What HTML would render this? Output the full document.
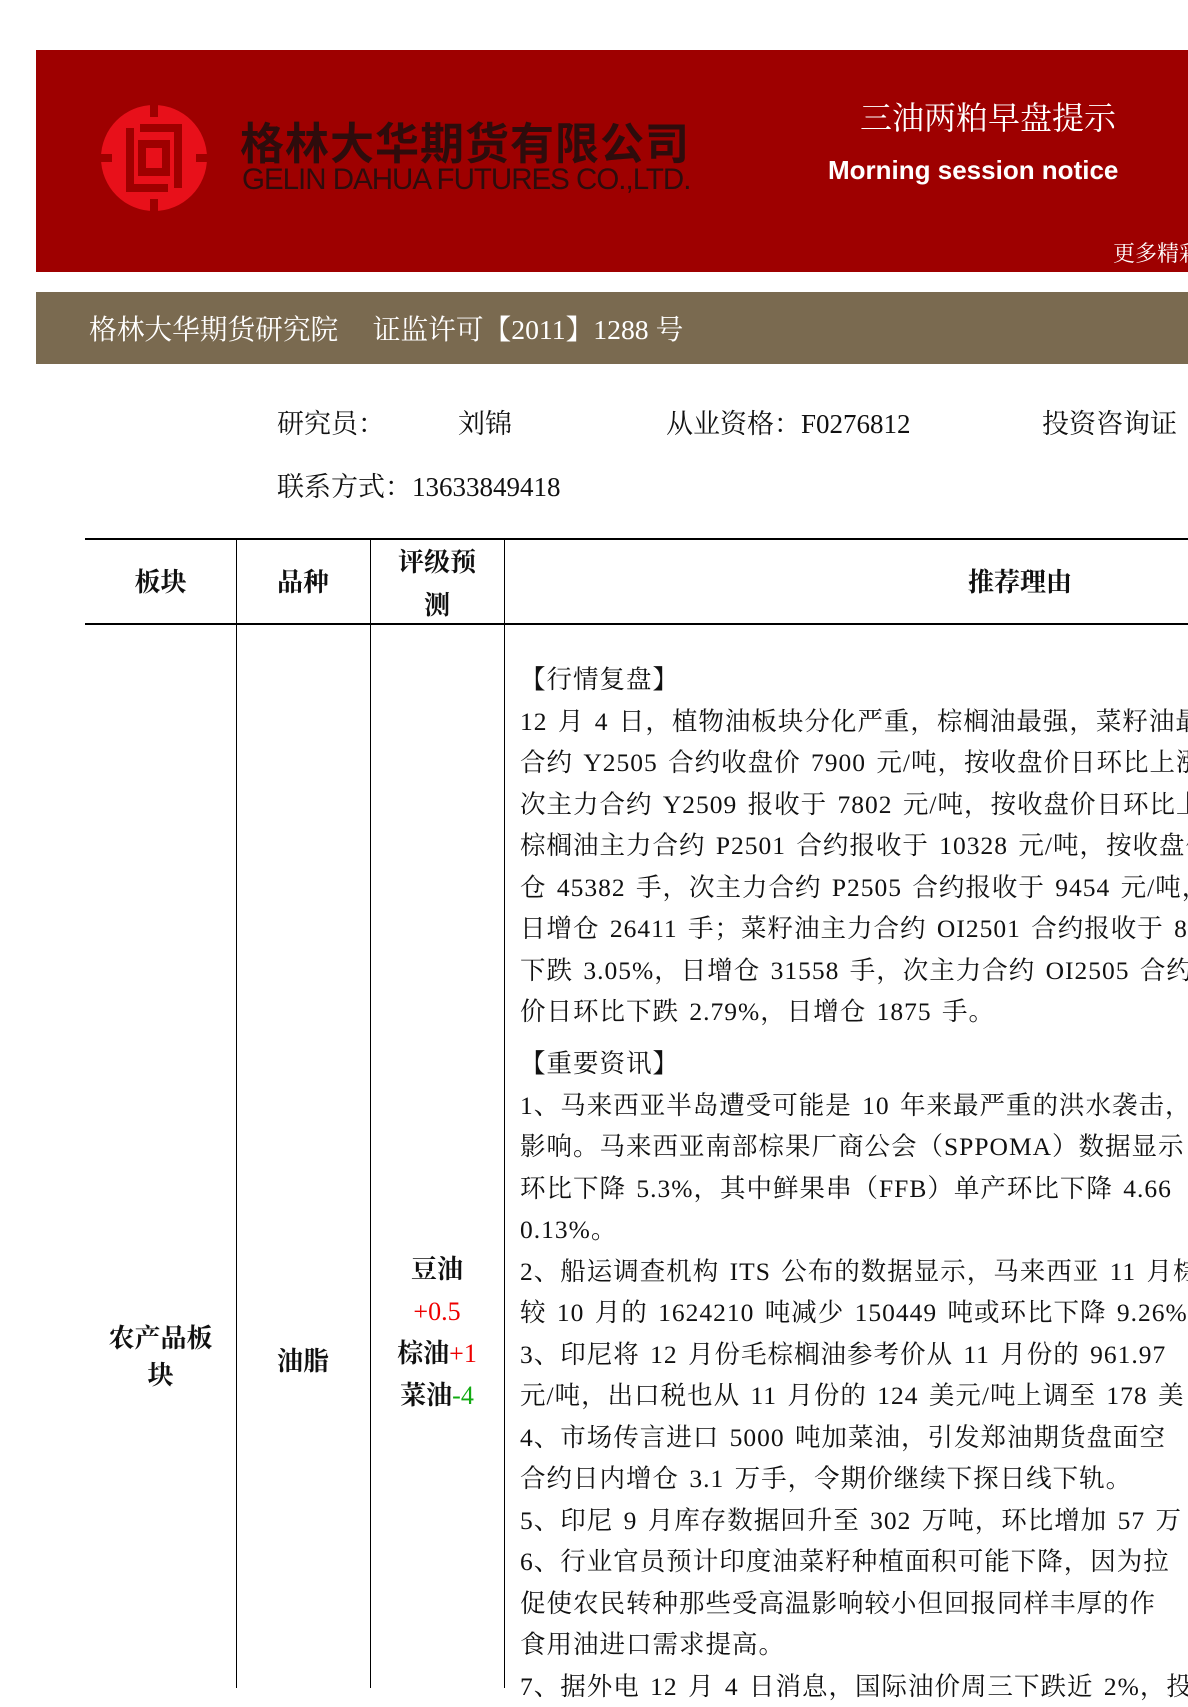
<!DOCTYPE html>
<html><head><meta charset="utf-8"><style>
*{margin:0;padding:0;box-sizing:border-box}
body{width:1188px;height:1680px;overflow:hidden;background:#fff;position:relative;font-family:"Liberation Serif","Noto Serif CJK SC",serif;color:#111}
.a{position:absolute;white-space:nowrap}
.red{position:absolute;left:36px;top:50px;width:1200px;height:222px;background:#9e0000}
.brown{position:absolute;left:36px;top:292px;width:1200px;height:72px;background:#7a6a50}
.hl{position:absolute;height:1px;background:#000}
.vl{position:absolute;width:1px;background:#000}
.t{position:absolute;left:520px;font-size:25.5px;line-height:41.5px;white-space:nowrap;letter-spacing:1px;word-spacing:3px}
.c{position:absolute;text-align:center;font-size:26px;font-weight:bold;line-height:40px}
</style></head><body>
<div class="red"></div>
<svg class="a" style="left:98px;top:104px" width="112" height="108" viewBox="0 0 112 108">
<circle cx="56" cy="54" r="53" fill="#e8101a"/>
<g fill="none" stroke="#9e0000" stroke-width="8">
<path d="M32 24 V84 H70"/>
<path d="M80 84 V24 H42"/>
<rect x="44" y="40" width="24" height="28"/>
<path d="M56 0 V13 M56 95 V108 M0 54 H14 M98 54 H112"/>
</g></svg>
<div class="a" style="left:240px;top:108px;font:bold 44px 'Liberation Sans','Noto Sans CJK SC',sans-serif;color:#2e0c0c;letter-spacing:1px">格林大华期货有限公司</div>
<div class="a" style="left:242px;top:163px;font:29.5px 'Liberation Sans',sans-serif;color:#2e0c0c;letter-spacing:-1px">GELIN DAHUA FUTURES CO.,LTD.</div>
<div class="a" style="left:860px;top:93px;font-size:32px;color:#fff">三油两粕早盘提示</div>
<div class="a" style="left:828px;top:155px;font:bold 26px 'Liberation Sans',sans-serif;color:#fff">Morning session notice</div>
<div class="a" style="left:1113px;top:237px;font-size:22px;color:#fff">更多精彩</div>
<div class="brown"></div>
<div class="a" style="left:89px;top:307px;font-size:27.7px;color:#fff">格林大华期货研究院　 证监许可【2011】1288 号</div>
<div class="a" style="left:277px;top:402px;font-size:27px">研究员：</div>
<div class="a" style="left:458px;top:402px;font-size:27px">刘锦</div>
<div class="a" style="left:666px;top:402px;font-size:27px">从业资格：F0276812</div>
<div class="a" style="left:1042px;top:402px;font-size:27px">投资咨询证</div>
<div class="a" style="left:277px;top:465px;font-size:27px">联系方式：13633849418</div>
<div class="hl" style="left:85px;top:538px;width:1110px;height:2px"></div>
<div class="hl" style="left:85px;top:623px;width:1110px;height:2px"></div>
<div class="vl" style="left:236px;top:538px;height:1150px"></div>
<div class="vl" style="left:370px;top:538px;height:1150px"></div>
<div class="vl" style="left:504px;top:538px;height:1150px"></div>
<div class="c" style="left:85px;width:151px;top:563px">板块</div>
<div class="c" style="left:236px;width:134px;top:563px">品种</div>
<div class="c" style="left:370px;width:134px;top:541px;line-height:43px">评级预<br>测</div>
<div class="c" style="left:920px;width:200px;top:563px">推荐理由</div>
<div class="c" style="left:85px;width:151px;top:1320px;line-height:37px">农产品板<br>块</div>
<div class="c" style="left:236px;width:134px;top:1342px">油脂</div>
<div class="c" style="left:370px;width:134px;top:1249px;line-height:42px">豆油<br><span style="color:#e00;font-weight:normal">+0.5</span><br>棕油<span style="color:#e00;font-weight:normal">+1</span><br>菜油<span style="color:#1a1;font-weight:normal">-4</span></div>
<div class="t" style="top:659px">【行情复盘】<br>12 月 4 日，植物油板块分化严重，棕榈油最强，菜籽油最弱。<br>合约 Y2505 合约收盘价 7900 元/吨，按收盘价日环比上涨<br>次主力合约 Y2509 报收于 7802 元/吨，按收盘价日环比上涨<br>棕榈油主力合约 P2501 合约报收于 10328 元/吨，按收盘价<br>仓 45382 手，次主力合约 P2505 合约报收于 9454 元/吨，按<br>日增仓 26411 手；菜籽油主力合约 OI2501 合约报收于 8<br>下跌 3.05%，日增仓 31558 手，次主力合约 OI2505 合约报<br>价日环比下跌 2.79%，日增仓 1875 手。</div>
<div class="t" style="top:1043px">【重要资讯】<br>1、马来西亚半岛遭受可能是 10 年来最严重的洪水袭击，<br>影响。马来西亚南部棕果厂商公会（SPPOMA）数据显示<br>环比下降 5.3%，其中鲜果串（FFB）单产环比下降 4.66<br>0.13%。<br>2、船运调查机构 ITS 公布的数据显示，马来西亚 11 月棕<br>较 10 月的 1624210 吨减少 150449 吨或环比下降 9.26%。<br>3、印尼将 12 月份毛棕榈油参考价从 11 月份的 961.97<br>元/吨，出口税也从 11 月份的 124 美元/吨上调至 178 美<br>4、市场传言进口 5000 吨加菜油，引发郑油期货盘面空<br>合约日内增仓 3.1 万手，令期价继续下探日线下轨。<br>5、印尼 9 月库存数据回升至 302 万吨，环比增加 57 万<br>6、行业官员预计印度油菜籽种植面积可能下降，因为拉<br>促使农民转种那些受高温影响较小但回报同样丰厚的作<br>食用油进口需求提高。<br>7、据外电 12 月 4 日消息，国际油价周三下跌近 2%，投</div>
</body></html>
